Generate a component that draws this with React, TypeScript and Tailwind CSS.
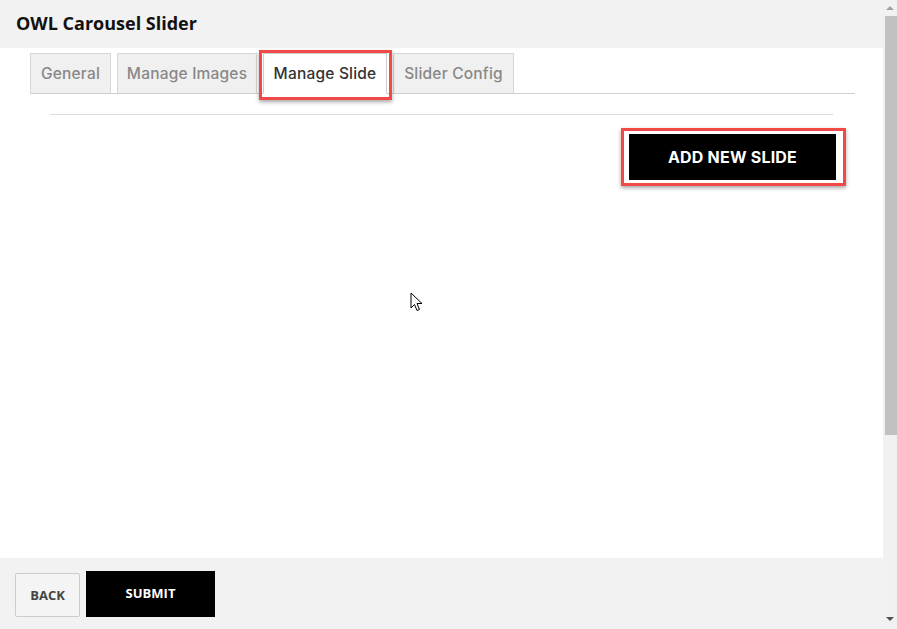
import { useState } from 'react';

const tabs = [
  { label: 'General', w: 'w-[81px]' },
  { label: 'Manage Images', w: 'w-[140px]' },
  { label: 'Manage Slide', w: 'w-[124px]' },
  { label: 'Slider Config', w: 'w-[121px]' },
];

function Cursor() {
  return (
    <svg className="absolute left-[410px] top-[292px]" width="14" height="21" viewBox="0 0 14 21">
      <path d="M1 1 L1 16 L4.5 12.5 L7 18.5 L9.5 17.5 L7 11.5 L12 11.5 Z" fill="#fff" stroke="#000" strokeWidth="1" strokeLinejoin="round" />
    </svg>
  );
}

function Scrollbar() {
  return (
    <div className="w-[14px] h-full flex flex-col items-center bg-[#f1f1f1]">
      <div className="h-[16px] flex items-center justify-center">
        <span className="block w-0 h-0 border-x-[4px] border-x-transparent border-b-[4px] border-b-[#a3a3a3]" />
      </div>
      <div className="w-[12px] h-[419px] bg-[#c1c1c1] ml-[2px]" />
      <div className="flex-1" />
      <div className="h-[20px] flex items-center justify-center">
        <span className="block w-0 h-0 border-x-[4px] border-x-transparent border-t-[4px] border-t-[#505050]" />
      </div>
    </div>
  );
}

export default function App() {
  const [active, setActive] = useState('Manage Slide');

  return (
    <div className="relative flex w-[897px] h-[629px] overflow-hidden bg-white" style={{ fontFamily: '"Open Sans", sans-serif' }}>
      <div className="flex flex-col flex-1 min-w-0">
        {/* header */}
        <div className="h-[48px] bg-[#f2f2f2] flex items-center pl-[16px] pb-[1px]">
          <h1 className="text-[18px] font-bold text-[#111]">OWL Carousel Slider</h1>
        </div>

        {/* tabs */}
        <div className="mx-[30px] mr-[28px] mt-[5px] flex gap-[6px] border-b border-[#cfcfcf]" style={{ fontFamily: 'Inter, sans-serif' }}>
          {tabs.map((t) => (
            <button
              key={t.label}
              onClick={() => setActive(t.label)}
              className={
                t.label === active
                  ? `relative ${t.w} h-[41px] -mb-px pt-[1px] bg-white border border-[#cccccc] border-b-white text-[15.5px] font-medium text-[#333] tracking-[0.2px]`
                  : `${t.w} h-[40px] pt-[1px] bg-[#f0f0f0] border border-[#d6d6d6] border-b-0 text-[15.5px] font-medium text-[#888] tracking-[0.2px]`
              }
            >
              {t.label}
              {t.label === active && (
                <span className="absolute -left-[5px] -right-[6px] -top-[4px] -bottom-[7px] border-[3px] border-[#f24848] shadow-[0_2px_4px_rgba(0,0,0,0.35)]" />
              )}
            </button>
          ))}
        </div>

        {/* content */}
        <div className="flex-1 px-[50px] pt-[20px]">
          <div className="border-t border-[#dcdcdc]" />
          <div className="flex justify-end pt-[13px]">
            <div className="-mr-[13px] border-[3px] border-[#f24848] bg-white pl-[5px] pr-[7px] py-[3px] shadow-[0_2px_4px_rgba(0,0,0,0.35)]">
              <button className="w-[207px] h-[46px] bg-black text-white text-[16px] font-bold tracking-[0.2px]" style={{ fontFamily: 'Inter, sans-serif' }}>
                ADD NEW SLIDE
              </button>
            </div>
          </div>
        </div>

        {/* footer */}
        <div className="h-[71px] bg-[#f2f2f2] flex items-center gap-[6px] pl-[15px] pt-[2px]">
          <button className="w-[65px] h-[44px] border border-[#cccccc] rounded-[2px] bg-[#f4f4f4] text-[13px] font-bold text-[#444] pt-[3px]">
            BACK
          </button>
          <button className="w-[129px] h-[46px] bg-black text-white text-[13px] font-bold -mt-[2px]">
            SUBMIT
          </button>
        </div>
      </div>

      <Scrollbar />
      <Cursor />
    </div>
  );
}
